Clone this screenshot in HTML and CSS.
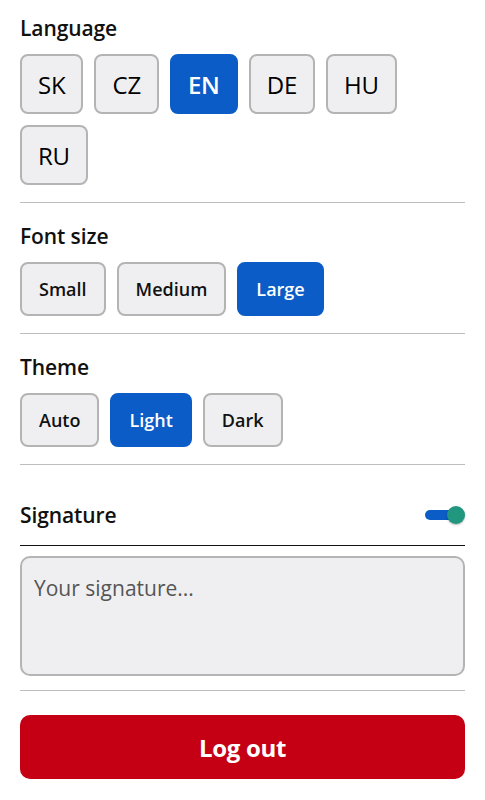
FILE: index.html
```html
<!DOCTYPE html>
<html lang="en">
<head>
<meta charset="utf-8">
<link rel="stylesheet" href="styles.css">
</head>
<body>
<div class="panel">
  <section class="section first">
    <div class="label">Language</div>
    <div class="options lang">
      <button class="opt">SK</button>
      <button class="opt">CZ</button>
      <button class="opt active">EN</button>
      <button class="opt">DE</button>
      <button class="opt">HU</button>
      <button class="opt">RU</button>
    </div>
  </section>
  <section class="section">
    <div class="label">Font size</div>
    <div class="options small">
      <button class="opt">Small</button>
      <button class="opt">Medium</button>
      <button class="opt active">Large</button>
    </div>
  </section>
  <section class="section">
    <div class="label">Theme</div>
    <div class="options small">
      <button class="opt">Auto</button>
      <button class="opt active">Light</button>
      <button class="opt">Dark</button>
    </div>
  </section>
  <section class="section sig">
    <div class="sig-head">
      <span class="label">Signature</span>
      <span class="toggle"><span class="track"></span><span class="knob"></span></span>
    </div>
    <textarea class="sig-text" placeholder="Your signature..."></textarea>
  </section>
  <div class="logout-wrap">
    <button class="logout">Log out</button>
  </div>
</div>
</body>
</html>
```
FILE: styles.css
```css
* { box-sizing: border-box; }
html, body { margin: 0; padding: 0; background: #fff; }
body {
  font-family: "Open Sans", "Noto Sans", sans-serif;
  color: #111;
}
.panel { padding: 0 20px; }
.section {
  padding: 21px 0 17px;
  border-bottom: 1px solid #bdbdbd;
}
.section.first { padding-top: 16px; }
.label {
  font-size: 21px;
  line-height: 24px;
  font-weight: 600;
  color: #111;
  letter-spacing: -0.1px;
}
.options {
  display: flex;
  flex-wrap: wrap;
  gap: 11px;
  margin-top: 14px;
}
.opt {
  font-family: inherit;
  background: #efeff1;
  border: 2px solid #b4b4b4;
  border-radius: 8px;
  color: #111;
  cursor: pointer;
  padding: 0;
}
.lang .opt {
  height: 60px;
  padding: 0 16px;
  font-size: 24px;
  font-weight: 400;
  color: #000;
  letter-spacing: -0.2px;
}
.small .opt {
  height: 54px;
  padding: 0 17px;
  font-size: 18px;
  font-weight: 600;
  letter-spacing: 0;
}
.opt.active {
  background: #0b5cc6;
  border-color: #0b5cc6;
  color: #fff;
  font-weight: 600;
}
.sig { padding: 29px 0 14px; }
.sig-head {
  display: flex;
  align-items: center;
  justify-content: space-between;
  border-bottom: 1px solid #111;
  padding-bottom: 10px;
  height: 52px;
}
.toggle {
  position: relative;
  width: 40px;
  height: 18px;
  display: inline-block;
}
.track {
  position: absolute;
  left: 0;
  top: 4px;
  width: 34px;
  height: 10px;
  border-radius: 5px;
  background: #0b5cc6;
}
.knob {
  position: absolute;
  right: 0;
  top: 0;
  width: 18px;
  height: 18px;
  border-radius: 50%;
  background: #21977f;
  box-shadow: 0 1px 2px rgba(0,0,0,0.3);
}
.sig-text {
  display: block;
  width: 100%;
  height: 120px;
  margin-top: 10px;
  background: #efeff1;
  border: 2px solid #b4b4b4;
  border-radius: 10px;
  padding: 17px 12px;
  font-family: inherit;
  font-size: 21px;
  line-height: 26px;
  resize: none;
  color: #111;
}
.sig-text::placeholder { color: #555; }
.logout-wrap { padding-top: 24px; }
.logout {
  display: block;
  width: 100%;
  height: 64px;
  background: #c50014;
  border: none;
  border-radius: 10px;
  color: #fff;
  font-family: inherit;
  font-size: 24px;
  font-weight: 700;
  letter-spacing: -0.3px;
}
```
